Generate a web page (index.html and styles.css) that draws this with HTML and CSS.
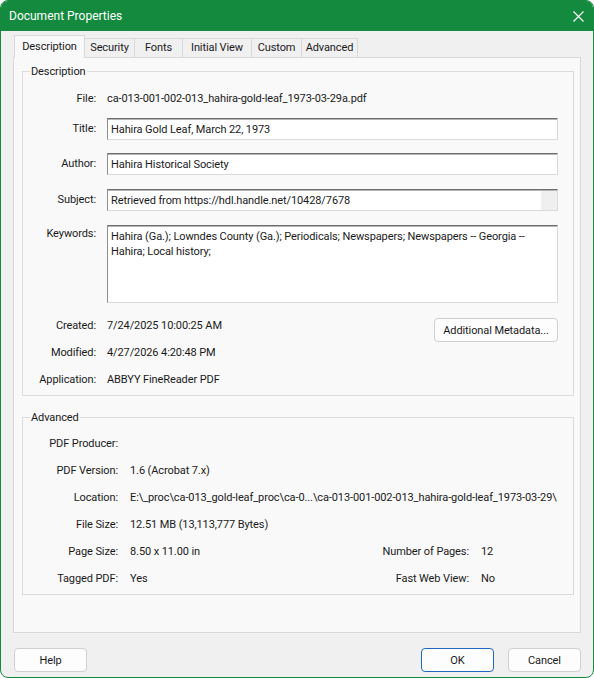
FILE: index.html
```html
<!DOCTYPE html>
<html lang="en">
<head>
<meta charset="utf-8">
<title>Document Properties</title>
<link rel="stylesheet" href="styles.css">
</head>
<body>
<div class="window">
  <div class="titlebar">
    <span class="title">Document Properties</span>
    <svg class="close" viewBox="0 0 11 11" width="11" height="11"><path d="M0.5 0.5 L10.5 10.5 M10.5 0.5 L0.5 10.5" stroke="#fff" stroke-width="1.1" fill="none"/></svg>
  </div>
  <div class="content">
    <div class="tabs">
      <div class="tab tab-description selected">Description</div>
      <div class="tab tab-security">Security</div>
      <div class="tab tab-fonts">Fonts</div>
      <div class="tab tab-initial">Initial View</div>
      <div class="tab tab-custom">Custom</div>
      <div class="tab tab-advanced">Advanced</div>
    </div>
    <div class="panel">
      <fieldset class="group group-desc">
        <legend>Description</legend>
        <div class="row row-file"><span class="label text">File:</span><span class="value text">ca-013-001-002-013_hahira-gold-leaf_1973-03-29a.pdf</span></div>
        <div class="row row-title"><span class="label">Title:</span><div class="field">Hahira Gold Leaf, March 22, 1973</div></div>
        <div class="row row-author"><span class="label">Author:</span><div class="field">Hahira Historical Society</div></div>
        <div class="row row-subject"><span class="label">Subject:</span><div class="field field-scroll"><span class="field-text">Retrieved from https://hdl.handle.net/10428/7678</span><span class="scroll"></span></div></div>
        <div class="row row-keywords"><span class="label">Keywords:</span><div class="field area">Hahira (Ga.); Lowndes County (Ga.); Periodicals; Newspapers; Newspapers -- Georgia --<br>Hahira; Local history;</div></div>
        <div class="meta">
          <span class="label text">Created:</span><span class="value text">7/24/2025 10:00:25 AM</span>
          <button class="btn btn-meta">Additional Metadata...</button>
          <span class="label text">Modified:</span><span class="value text">4/27/2026 4:20:48 PM</span>
          <span class="label text">Application:</span><span class="value text">ABBYY FineReader PDF</span>
        </div>
      </fieldset>
      <fieldset class="group group-adv">
        <legend>Advanced</legend>
        <div class="adv">
          <span class="alabel text">PDF Producer:</span><span class="avalue wide text"></span>
          <span class="alabel text">PDF Version:</span><span class="avalue wide text">1.6 (Acrobat 7.x)</span>
          <span class="alabel text">Location:</span><span class="avalue wide clip text">E:\_proc\ca-013_gold-leaf_proc\ca-0...\ca-013-001-002-013_hahira-gold-leaf_1973-03-29\ca-013-001-002-013_hahira-gold-leaf_1973-03-29a.pdf</span>
          <span class="alabel text">File Size:</span><span class="avalue wide text">12.51 MB (13,113,777 Bytes)</span>
          <span class="alabel text">Page Size:</span><span class="avalue text">8.50 x 11.00 in</span><span class="alabel text">Number of Pages:</span><span class="avalue text">12</span>
          <span class="alabel text">Tagged PDF:</span><span class="avalue text">Yes</span><span class="alabel text">Fast Web View:</span><span class="avalue text">No</span>
        </div>
      </fieldset>
    </div>
    <div class="footer">
      <button class="btn btn-dialog">Help</button>
      <div class="spacer"></div>
      <button class="btn btn-dialog btn-ok">OK</button>
      <button class="btn btn-dialog">Cancel</button>
    </div>
  </div>
</div>
</body>
</html>
```
FILE: styles.css
```css
* { box-sizing: border-box; }
html, body { margin: 0; padding: 0; }
body {
  width: 594px;
  height: 678px;
  font-family: Roboto, "Noto Sans", sans-serif;
  font-size: 11px;
  letter-spacing: -0.1px;
  color: #1a1a1a;
  background: #ffffff;
}
.window {
  width: 594px;
  height: 678px;
  border: 1px solid #138a3e;
  border-radius: 8px;
  background: #f0f0f0;
  overflow: hidden;
  display: flex;
  flex-direction: column;
}
.titlebar {
  height: 30px;
  flex-shrink: 0;
  background: #138a3e;
  color: #ffffff;
  display: flex;
  align-items: center;
  justify-content: space-between;
  padding: 0 9px 0 8px;
}
.title { font-size: 12px; letter-spacing: 0; }
.close { display: block; }
.content { padding: 4px 12px 0 12px; }
.tabs {
  display: flex;
  align-items: flex-end;
  height: 22px;
  padding-left: 1px;
}
.tab {
  height: 19px;
  border: 1px solid #d9d9d9;
  border-bottom: none;
  margin-left: -1px;
  background: #f0f0f0;
  display: flex;
  align-items: center;
  justify-content: center;
  line-height: 16px;
  white-space: nowrap;
}
.tab:first-child { margin-left: 0; }
.tab.selected {
  height: 23px;
  margin-bottom: -1px;
  background: #f9f9f9;
  position: relative;
  z-index: 1;
}
.tab-description { width: 71px; }
.tab-security { width: 51px; }
.tab-fonts { width: 49px; }
.tab-initial { width: 70px; }
.tab-custom { width: 51px; }
.tab-advanced { width: 57px; }
.panel {
  height: 576px;
  border: 1px solid #d9d9d9;
  background: #f9f9f9;
  padding: 5px 6px 0 8px;
}
.group {
  margin: 0;
  padding: 0 15px 8px 0;
  border: 1px solid #dcdcdc;
  min-width: 0;
}
.group legend {
  margin-left: 7px;
  padding: 2px 1px 0 1px;
  line-height: 14px;
  height: 16px;
}
.group-adv { margin-top: 13px; }
.row {
  display: flex;
  align-items: center;
  column-gap: 11px;
}
.label {
  width: 73px;
  flex-shrink: 0;
  text-align: right;
  line-height: 16px;
  white-space: nowrap;
}
.value { line-height: 16px; white-space: nowrap; }
.text {
  line-height: 14px;
  padding-top: 2px;
  height: 16px;
}
.row-file { margin-top: 11px; }
.row-title { margin-top: 12px; }
.row-author { margin-top: 13px; }
.row-subject { margin-top: 14px; }
.row-keywords { margin-top: 14px; align-items: flex-start; }
.row-keywords .label { margin-top: 1px; }
.field {
  flex: 1;
  min-width: 0;
  height: 22px;
  background: #ffffff;
  border: 1px solid #dadada;
  border-top-color: #6e6e6e;
  border-left-color: #8e8e8e;
  box-shadow: inset 0 1px 0 #b4b4b4;
  padding: 0 3px;
  display: flex;
  align-items: center;
  white-space: nowrap;
  overflow: hidden;
}
.field-scroll { padding-right: 0; align-items: stretch; }
.field-text { flex: 1; display: flex; align-items: center; }
.scroll { width: 16px; background: #efefef; margin-top: 1px; }
.area {
  height: 78px;
  display: block;
  padding-top: 3px;
  line-height: 15px;
  white-space: nowrap;
}
.meta {
  display: grid;
  grid-template-columns: 73px 1fr auto;
  column-gap: 11px;
  row-gap: 11px;
  margin-top: 14px;
}
.btn {
  font: inherit;
  letter-spacing: inherit;
  color: #1a1a1a;
  height: 24px;
  padding: 0;
  border: 1px solid #d0d0d0;
  border-radius: 4px;
  background: #fdfdfd;
}
.btn-meta {
  grid-column: 3;
  grid-row: 1 / span 2;
  align-self: start;
  margin-top: 1px;
  width: 124px;
}
.adv {
  display: grid;
  grid-template-columns: 95px 227px 100px 76px;
  column-gap: 12px;
  row-gap: 11px;
  margin-top: 10px;
}
.alabel { text-align: right; white-space: nowrap; }
.avalue { white-space: nowrap; }
.avalue.wide { grid-column: 2 / -1; }
.clip { overflow: hidden; }
.footer {
  display: flex;
  margin-top: 15px;
  padding-left: 1px;
  column-gap: 14px;
}
.spacer { flex: 1; }
.btn-dialog { width: 73px; }
.btn-ok { border-color: #1f68c1; }
```
